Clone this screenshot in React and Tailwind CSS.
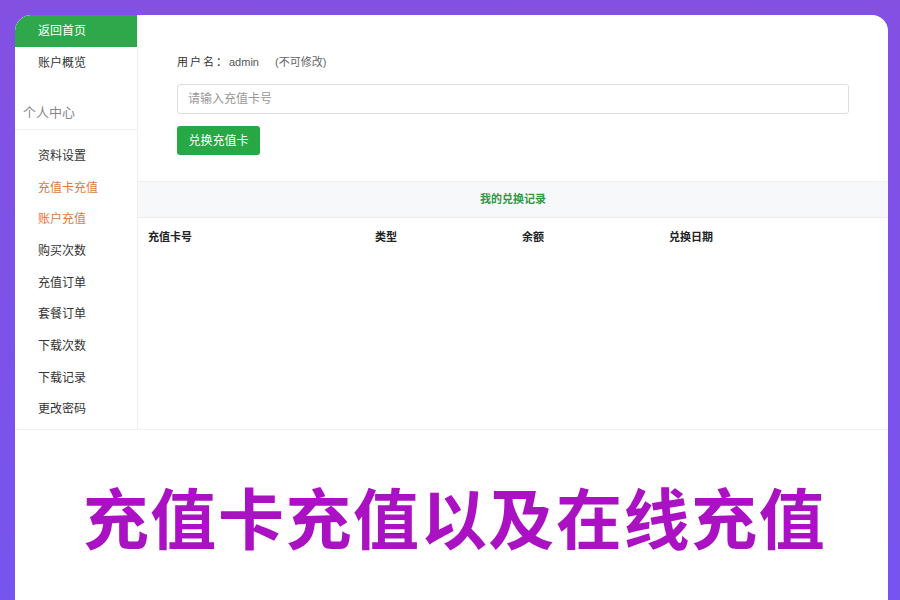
const menu = [
  { label: "资料设置" },
  { label: "充值卡充值", active: true },
  { label: "账户充值", active: true },
  { label: "购买次数" },
  { label: "充值订单" },
  { label: "套餐订单" },
  { label: "下载次数" },
  { label: "下载记录" },
  { label: "更改密码" },
];

const font = { fontFamily: '"Liberation Sans", "Noto Sans CJK SC", sans-serif' };

const Sidebar = () => (
  <div className="w-[123px] shrink-0 border-r border-[#eeeeee]">
    <div className="h-[32px] bg-[#2ea84a] rounded-tl-[16px] flex items-center pl-[23px] text-[12px] text-white">
      返回首页
    </div>
    <div className="h-[32px] flex items-center pl-[23px] text-[12px] text-[#333]">账户概览</div>
    <div className="mt-[17px] h-[34px] flex items-center pl-[8px] text-[13px] text-[#888] border-b border-[#eeeeee]">
      个人中心
    </div>
    <div className="pt-[10px]">
      {menu.map((m) => (
        <div
          key={m.label}
          className={
            "h-[31.7px] flex items-center pl-[23px] text-[12px] " +
            (m.active ? "text-[#e2793a]" : "text-[#333]")
          }
        >
          {m.label}
        </div>
      ))}
    </div>
  </div>
);

const Main = () => (
  <div className="flex-1 min-w-0">
    <div className="px-[39px] pt-[39px] h-[166px]">
      <div className="text-[11px] text-[#333] h-[16px] flex items-center">
        <span className="tracking-[2px]">用户名：</span>
        <span className="text-[#555]">admin</span>
        <span className="text-[#666] ml-[16px]">(不可修改)</span>
      </div>
      <input
        className="mt-[14px] block w-full h-[30px] border border-[#dddddd] rounded-[3px] px-[10px] text-[12px] outline-none placeholder:text-[#999]"
        placeholder="请输入充值卡号"
        style={font}
      />
      <button className="mt-[12px] w-[83px] h-[29px] bg-[#28a745] rounded-[3px] text-[12px] text-white">
        兑换充值卡
      </button>
    </div>
    <div className="h-[37px] bg-[#f7f8fa] border-y border-[#eeeeee] flex items-center justify-center text-[11px] font-bold text-[#2e9a45]">
      我的兑换记录
    </div>
    <div className="flex pl-[10px] pt-[11px] text-[11px] font-bold text-[#222]">
      <div className="w-[227px]">充值卡号</div>
      <div className="w-[147px]">类型</div>
      <div className="w-[147px]">余额</div>
      <div>兑换日期</div>
    </div>
  </div>
);

export default function App() {
  return (
    <div
      className="w-[900px] h-[600px] overflow-hidden bg-gradient-to-b from-[#8350e2] to-[#7654ee] pt-[15px] pl-[15px] pr-[12px]"
      style={font}
    >
      <div className="bg-white h-full rounded-t-[16px] overflow-hidden">
        <div className="flex h-[415px] border-b border-[#f0f0f0]">
          <Sidebar />
          <Main />
        </div>
        <div className="flex justify-center pt-[58px] pl-[6px]">
          <div className="text-[66px] leading-none font-bold text-[#a911c2] tracking-[1.6px] [text-shadow:0_0_6px_rgba(255,255,255,0.9)]">
            充值卡充值以及在线充值
          </div>
        </div>
      </div>
    </div>
  );
}
